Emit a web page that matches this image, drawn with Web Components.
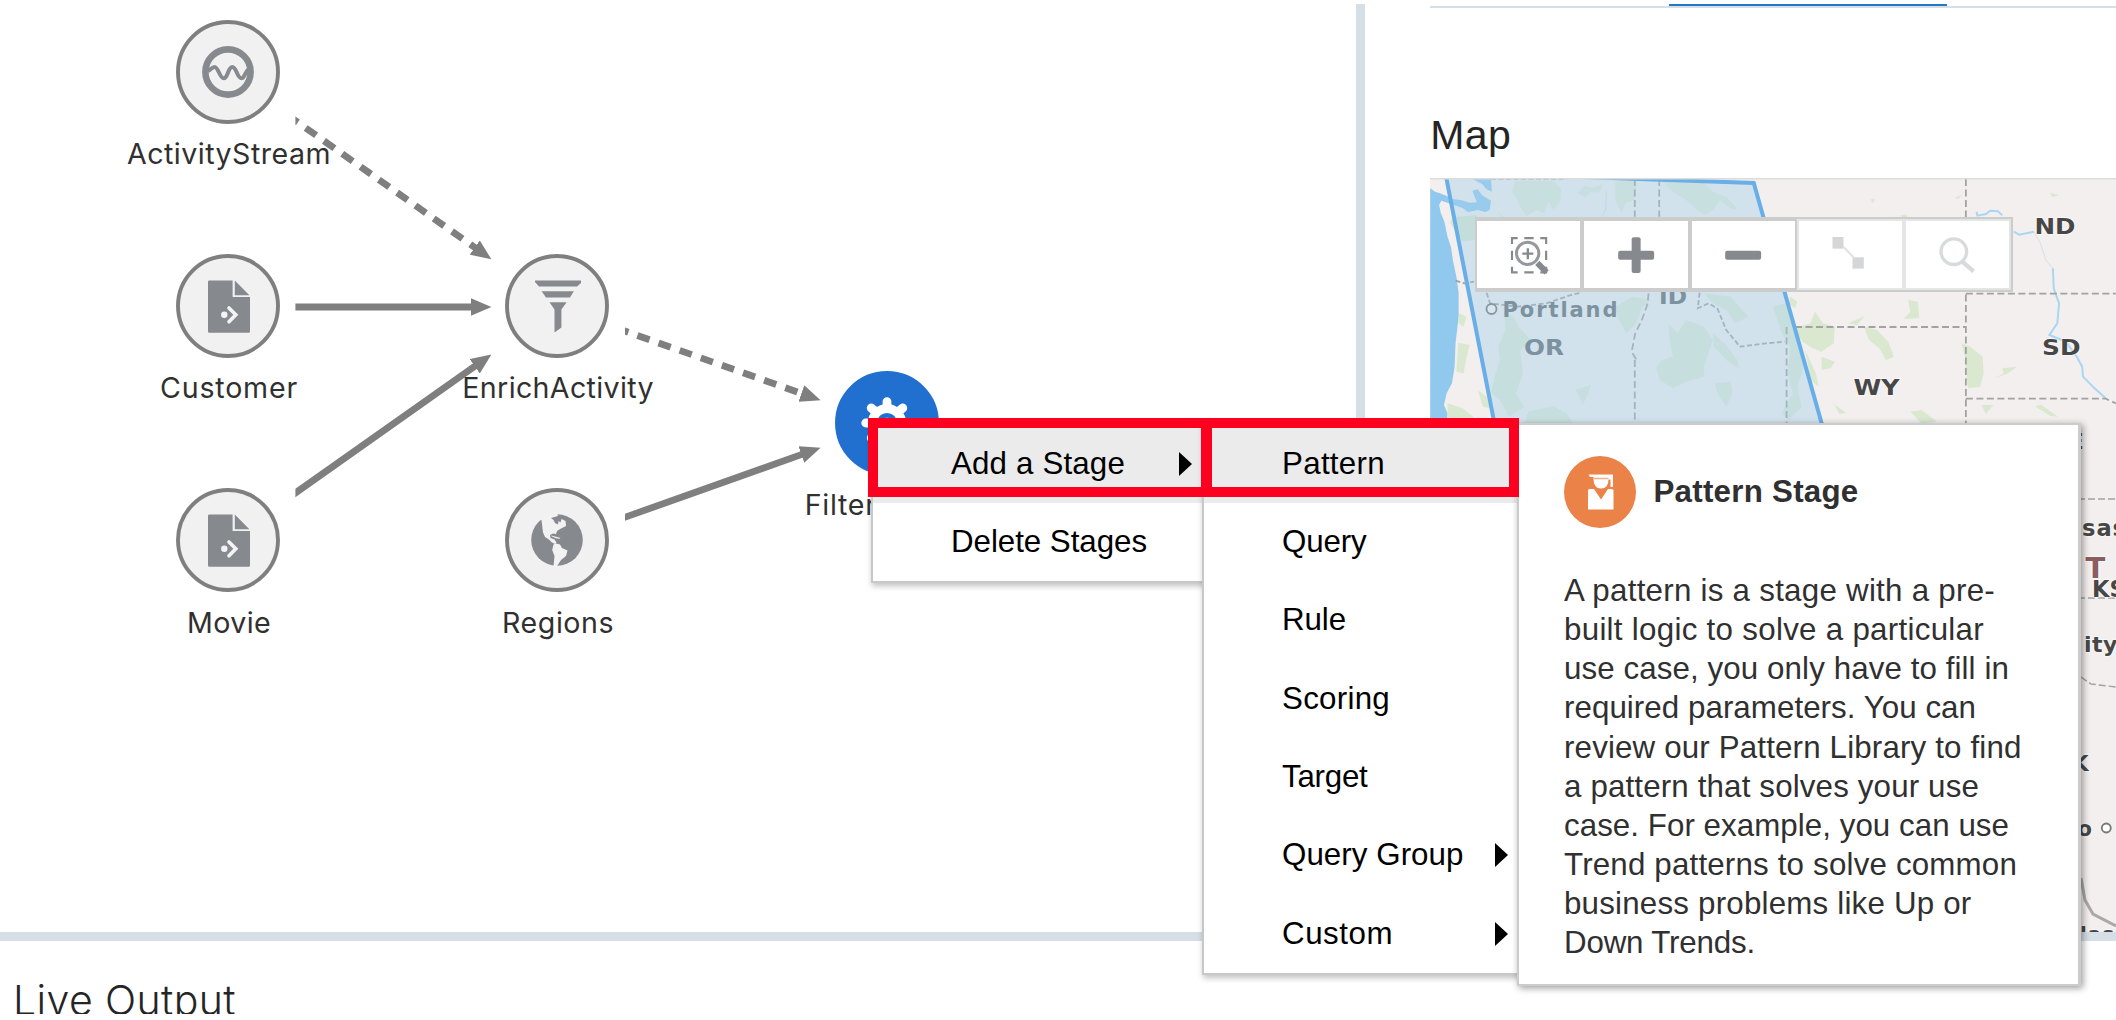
<!DOCTYPE html>
<html lang="en">
<head>
<meta charset="utf-8">
<title>Pipeline editor</title>
<style>
body{margin:0;background:#fff;overflow:hidden;font-family:"Liberation Sans",Arial,sans-serif}
</style>
</head>
<body>
<pipeline-app></pipeline-app>
<script>
const define=(name,html,extra)=>{
  const t=document.createElement('template');
  t.innerHTML=html;
  customElements.define(name,class extends HTMLElement{
    connectedCallback(){
      if(this.shadowRoot)return;
      this.attachShadow({mode:'open'}).append(t.content.cloneNode(true));
      if(extra)extra(this,this.shadowRoot);
    }
  });
};

/* A single line of text whose tracking is adjusted to a given advance width. */
define('fit-text',`<style>:host{display:inline-block;white-space:nowrap}</style><span><slot></slot></span>`,(el,root)=>{
  const w=parseFloat(el.getAttribute('w'));
  if(!w)return;
  const natural=root.querySelector('span').getBoundingClientRect().width;
  el.style.letterSpacing=((w-natural)/el.textContent.length)+'px';
});

const icons={
  stream:`<circle r="22.6" fill="none" stroke="#868a8f" stroke-width="6.6"/><path d="M-20-1C-17-3-15.500-5-13.500-5C-9.500-5-8.500 6.300-4.300 6.300S0-5 4.300-5S9 6.300 13.500 6.300C16 6.300 17 1 20-2.500" fill="none" stroke="#868a8f" stroke-width="4"/>`,
  file:`<path fill="#868a8f" d="M-19-25.600H4.600V-8.900H22V25.500a1.300 1.300 0 0 1-1.300 1.300H-18.700a1.300 1.300 0 0 1-1.300-1.300V-24.300A1.300 1.300 0 0 1-19-25.600ZM6.800-25.600L21.400-10.800H6.800Z"/><circle cx="-3.700" cy="8.800" r="3.200" fill="#f4f4f4"/><path d="M1 2L7.800 8.800L1 15.800" fill="none" stroke="#f4f4f4" stroke-width="3.600" stroke-linecap="round"/>`,
  funnel:`<path fill="#868a8f" d="M-22-25.500H24V-23L20-19.500H-18L-22-24ZM-15.400-14.700H16.800L13-8.500H-11ZM-7.500-3.800H9.600L4.400 3.500V21.500L-2.500 26.400V3.500Z"/>`,
  globe:`<circle r="25.800" fill="#868a8f"/><path fill="#f2f2f2" d="M-18-21L-15.500-20L-14-7.500L-12-3L-8-.5L-5 2.500L-2 4L-.5 2.500L-2.500-.5L-6.500-2L-7-5L-4-6.500L-1-6L0-9L4-11.500L9-14L8.500-19L4.500-21L3.500-17.500L1.500-19L1-15.500L-2-17L-3.500-20L-6-22L1-24L0-27L-12-26ZM-3.500 4.500L-1 3.500L3 4.500L5 8L10.500 10.500L9 16L4 20L-.5 27H-3.500L-2.500 16L-4.800 10ZM-6-4.500L0-3L3.500-2L2.500-1.200L-1-1.800L-5-3.500Z"/>`,
  gear:`<circle r="14.600" fill="none" stroke="#fff" stroke-width="9"/><g stroke="#fff" stroke-width="8.800" stroke-linecap="round"><path d="M0-16V-21.300M0 16V21.300M-16 0H-21.300M16 0H21.300M-11.500-11.500L-15.800-15M11.500-11.500L15.800-15M-11.500 11.500L-15.800 15M11.500 11.500L15.800 15"/></g><circle r="5.500" fill="#8fb6e6"/>`
};

define('stage-node',`<style>
:host{position:absolute;width:104px;display:flex;flex-direction:column;align-items:center;gap:13.500px;
 font:28.600px/34px Inter,"Helvetica Neue",sans-serif;color:#303030}
svg{display:block;width:104px;height:104px;flex:none}
::slotted(fit-text){margin-left:2px}
</style><svg viewBox="-52 -52 104 104"><circle class="bg" r="50" fill="#f1f1f1" stroke="#7f7f7f" stroke-width="3.900"/><g></g></svg><slot></slot>`,(el,root)=>{
  const k=el.getAttribute('icon');
  el.style.left=(el.getAttribute('cx')-52)+'px';
  el.style.top=(el.getAttribute('cy')-52)+'px';
  root.querySelector('g').innerHTML=icons[k];
  if(k==='gear'){const b=root.querySelector('.bg');b.setAttribute('fill','#216fce');b.setAttribute('stroke','#216fce')}
});

define('pipeline-canvas',`<style>
:host{display:block;position:relative;overflow:hidden}
svg{display:block;width:1356px;height:928px}
</style>
<svg viewBox="0 4 1356 928">
<defs>
<marker id="a" markerUnits="userSpaceOnUse" markerWidth="22" markerHeight="18" refX="20.400" refY="8.700" orient="auto"><path d="M0 0L20.400 8.700L0 17.400Z" fill="#7f7f7f"/></marker>
<clipPath id="c"><rect x="295.400" y="0" width="200" height="900"/></clipPath>
<clipPath id="d"><rect x="625" y="0" width="200" height="900"/></clipPath>
</defs>
<g stroke="#7f7f7f" fill="none">
<g clip-path="url(#c)">
<path stroke-width="6.800" stroke-dasharray="12.800 9.600" d="M287.400 115L480 251.200"/>
<path stroke-width="6.800" d="M290 307H474M290 496.800L478 364"/>
<g stroke-width=".01"><path marker-end="url(#a)" d="M295.400 120.700L491.400 259.300"/><path marker-end="url(#a)" d="M295 307H491.400"/><path marker-end="url(#a)" d="M295.400 493L491.400 354.500"/></g>
</g>
<g clip-path="url(#d)">
<path stroke-width="6.800" stroke-dasharray="12.800 9.600" d="M616.300 328L804 394.300"/>
<path stroke-width="6.800" d="M619 519.400L804 453.600"/>
<g stroke-width=".01"><path marker-end="url(#a)" d="M624.900 331L820.600 400.300"/><path marker-end="url(#a)" d="M624.900 517.300L820.600 447.700"/></g>
</g>
</g>
</svg>
<stage-node icon="stream" cx="228" cy="67.700"><fit-text w="204">ActivityStream</fit-text></stage-node>
<stage-node icon="file" cx="228" cy="301.600"><fit-text w="138">Customer</fit-text></stage-node>
<stage-node icon="file" cx="228" cy="536"><fit-text w="84">Movie</fit-text></stage-node>
<stage-node icon="funnel" cx="557.100" cy="301.600"><fit-text w="191.500">EnrichActivity</fit-text></stage-node>
<stage-node icon="globe" cx="557.100" cy="536"><fit-text w="112">Regions</fit-text></stage-node>
<stage-node icon="gear" cx="886.700" cy="418.700" style="align-items:flex-start"><fit-text w="72" style="margin-left:-30px">Filter</fit-text></stage-node>
`);

define('tool-button',`<style>
:host{box-sizing:border-box;display:flex;align-items:center;justify-content:center;width:107.200px;height:71.300px;border:2px solid #ccc;background:#fff}
:host([disabled]){border-color:#e4e6e6}
svg{width:36.300px;height:36.300px;overflow:visible}
</style><svg></svg>`,(el,root)=>{
  const s=root.querySelector('svg');
  const g={
    marquee:['121 94 109 109',`<g fill="none" stroke="#868a8f" stroke-width="6.500"><path d="M124 115V97.500H141M161 97.500H189M209 97.500H226.500V115M226.500 135V163M226.500 183V200H209M189 200H161M141 200H124V183M124 163V135"/><circle cx="171" cy="143" r="33.500" stroke-width="9" stroke="#95999d"/><path d="M155 144H188M171.500 128V161" stroke-width="7"/><path d="M200 172L228 200" stroke-width="18"/></g>`],
    plus:['443 94 109 109',`<g fill="#868a8f"><rect x="484" y="95" width="27" height="107" rx="6"/><rect x="443.500" y="135" width="108" height="27" rx="6"/></g>`],
    minus:['764.500 94 109 109',`<rect x="765" y="135" width="108" height="27" rx="6" fill="#868a8f"/>`],
    link:['1086.500 94 109 109',`<g fill="#d5d6d8"><rect x="1088" y="94" width="33" height="35"/><rect x="1148" y="155" width="34" height="34"/><path d="M1119 122L1154 158" stroke="#dfe0e1" stroke-width="6"/></g>`],
    search:['1408 94 109 109',`<g fill="none" stroke="#d9dadb"><circle cx="1452.500" cy="138" r="38.500" stroke-width="10"/><path d="M1477 167L1512 197" stroke-width="13"/></g>`]
  }[el.getAttribute('icon')];
  s.setAttribute('viewBox',g[0]);s.innerHTML=g[1];
});

define('map-toolbar',`<style>:host{position:absolute;left:45px;top:39px;display:flex;border:solid #ccc;border-width:2px 2px 2px 0}</style>
<tool-button icon="marquee"></tool-button><tool-button icon="plus"></tool-button><tool-button icon="minus"></tool-button><tool-button icon="link" disabled></tool-button><tool-button icon="search" disabled></tool-button>`);

define('region-map',`<style>
:host{display:block;position:relative;width:686px;height:754px;overflow:hidden;background:#f3efee}
svg{display:block;width:686px;height:754px}
text{font-family:"DejaVu Sans","Noto Sans",sans-serif;font-weight:700;fill:#474747;stroke:#fff;stroke-width:2px;paint-order:stroke;stroke-opacity:.5}
.o{fill:#7d92a0;stroke:none}
</style>
<svg viewBox="0 0 686 754">
<g transform="translate(-10 -18) scale(.4438 .33333)">
 <path fill="#90c8ee" d="M23 85L34 95 45 100 60 108 75 118 92 120 112 128 128 127 118 92 130 88 140 106 160 122 157 150 148 156 130 150 108 156 96 144 62 128 48 122 43 135 47 160 55 185 62 230 70 262 74 300 82 350 87 400 87 470 80 550 78 620 72 670 60 700 54 735 62 760 60 850 23 850ZM118 57H160L162 95 150 88 140 72Z"/>
 <g fill="#d9e8cf">
  <path d="M72 172L128 165 124 240 96 244 80 215 68 190ZM86 548L112 555 105 590 98 640 82 635ZM62 730L96 745 120 770 130 850 62 850Z"/>
  <path d="M88 460L105 470 98 500 86 490ZM130 690L150 710 158 745 142 740Z"/>
  <path opacity=".75" d="M215 62H300L318 85 316 125 300 150 290 125 280 160 262 150 240 168 225 140 220 120 208 95ZM370 78L390 85 412 72 404 98 385 95 372 112 355 100ZM440 66L490 60 482 120 462 130 455 160 440 120ZM548 64L640 68 660 95 690 110 715 148 700 146 676 120 660 150 640 165 625 150 600 120 570 95Z"/>
  <path opacity=".8" d="M190 455L212 470 222 500 250 540 226 570 232 640 216 700 235 740 200 770 180 720 160 700 170 640 180 600 176 560 192 510ZM440 440L478 410 520 420 500 445 488 490 465 520 448 480ZM560 490L580 520 600 480 640 500 660 540 640 620 640 650 600 665 570 685 540 660 532 620 545 600 570 590 562 540ZM640 400L700 410 740 470 710 490 690 450 660 430ZM664 670L700 665 704 700 690 740 670 700ZM795 440L825 430 835 480 860 560 865 620 850 680 860 740 830 780 815 760 840 700 828 640 835 560 815 520Z"/>
  <path opacity=".8" d="M350 690L385 675 378 705 366 735 358 705ZM245 755L300 738 330 760 345 790H235ZM660 520L690 555 715 600 718 625 690 600 662 560Z"/>
  <path d="M842 505L880 490 890 455 908 490 935 500 932 550 905 575 885 565 862 545ZM835 410L850 425 845 445 830 430ZM868 570L892 640 898 680 880 660ZM905 590L935 605 925 625 905 630ZM1100 420L1122 425 1125 475 1090 476 1105 455ZM1000 500L1030 510 1055 545 1068 590 1050 600 1035 565 1012 540ZM965 490L1002 468 985 495Z"/>
  <path d="M1220 550L1240 560 1268 590 1270 640 1262 680 1235 685 1230 630 1228 590ZM1295 655L1315 640 1312 625 1345 620 1325 640ZM1105 755L1130 750 1165 785 1130 790ZM925 715L935 735 960 758 945 762ZM1385 738L1400 735 1438 770 1420 768ZM1408 70L1420 98 1440 105 1425 112ZM1015 118L1025 118 1020 130ZM1080 168L1095 163 1100 175ZM1205 112L1222 105 1212 118ZM1265 735L1292 735 1275 762Z"/>
 </g>
 <g fill="none" stroke="#a9d6f4" stroke-width="2" vector-effect="non-scaling-stroke">
  <path vector-effect="non-scaling-stroke" stroke-width="2" d="M1254 155L1256 167 1275 162 1285 152 1302 154 1312 166M1338 215L1350 224 1383 215M1426 325L1428 385 1440 430 1436 490 1418 525 1455 545 1480 590 1492 620 1494 650 1520 685 1545 715"/>
  <path vector-effect="non-scaling-stroke" stroke-width="1" opacity=".5" d="M1383 215L1398 250 1410 300 1426 325M420 90L418 150 410 170M178 160L190 175"/>
 </g>
 <g fill="none" stroke="#a3a1a1" stroke-width="1.800" stroke-dasharray="7 3.500">
  <path vector-effect="non-scaling-stroke" d="M1230 57V790M1230 401H1568M1230 716H1545L1568 730M845 501H1230M826 501V790M484 57V170M484 600V790M539 57V170M515 400L513 430 500 480 485 520 477 575 488 600"/>
  <path vector-effect="non-scaling-stroke" stroke-dasharray="5 2.500" d="M80 362L100 370 122 365M150 398L158 430 220 440 285 430 340 405 365 398M630 398L626 445 650 430 670 445 690 510 712 545 720 560 780 550 822 545M160 57H330"/>
 </g>
 <path fill="#a4cfea" fill-opacity=".42" stroke="#6aaee8" stroke-width="4" vector-effect="non-scaling-stroke" d="M58 45L178 860 920 860 752 69 170 42Z"/>
</g>
<g fill="none" stroke="#a3a1a1" stroke-width="1.500"><path stroke-dasharray="7 3" d="M648 321H686M648 420H686M651 499L661 506 686 509"/><path stroke="#aaa8a8" stroke-width="3" d="M651 700L655 722 663 736 686 748"/></g>
<path d="M0 .5H686" stroke="#dcdcdc" stroke-width="2"/>
<text x="604.500" y="56" font-size="21.500" textLength="41" lengthAdjust="spacingAndGlyphs">ND</text>
<text x="612" y="176.500" font-size="21.500" textLength="38.500" lengthAdjust="spacingAndGlyphs">SD</text>
<text x="423.500" y="217" font-size="21.500" textLength="46" lengthAdjust="spacingAndGlyphs">WY</text>
<text class="o" x="94" y="176.500" font-size="21.500" textLength="40" lengthAdjust="spacingAndGlyphs">OR</text>
<text class="o" x="229" y="126" font-size="21.500" textLength="28" lengthAdjust="spacingAndGlyphs">ID</text>
<text class="o" x="72.500" y="139" font-size="21" textLength="115">Portland</text>
<circle cx="61.500" cy="131" r="5" fill="#dbe7ee" stroke="#8497a3" stroke-width="1.800"/>
<text x="639" y="271" font-size="21.500" >E</text>
<text x="652" y="358" font-size="22.500" letter-spacing="1">sas</text>
<text x="655.500" y="400" font-size="29" style="fill:#8a5d60">T</text>
<text x="662" y="419" font-size="22.500">KS</text>
<text x="654" y="473.700" font-size="22" letter-spacing=".5">ity</text>
<text x="642" y="593" font-size="21.500">K</text>
<text x="647.500" y="657.500" font-size="21">o</text>
<circle cx="676.300" cy="650" r="4.500" fill="#fff" stroke="#777" stroke-width="1.800"/>
<text x="650" y="763" font-size="20" letter-spacing="1">las</text>
</svg>
<map-toolbar></map-toolbar>`);

define('map-panel',`<style>
:host{display:flex;flex-direction:column;box-sizing:border-box;padding-left:65px;flex:1;min-width:0}
.tabs{height:5px;background:linear-gradient(#fff 0 2px,#d6dfe6 2px 4px,#fff 4px);display:flex}
.tabs i{display:block;margin-left:238.500px;width:278.500px;height:2.300px;background:#1f78c8}
h2{margin:103px 0 20px;font-weight:400;font-size:41px;line-height:46px;color:#252525}
</style><div class="tabs"><i></i></div><h2><fit-text w="81">Map</fit-text></h2><region-map></region-map>`);

define('menu-item',`<style>
:host{display:flex;align-items:center;justify-content:space-between;height:78.350px;line-height:80px;padding:0 10px 0 78px;font-size:31.300px;color:#000}
:host([active]){background:#ebebeb}
svg{display:none;width:13px;height:24px}
:host([sub]) svg{display:block}
</style><slot></slot><svg viewBox="0 0 13 24"><path d="M0 0L13 12L0 24Z"/></svg>`);

define('popup-menu',`<style>
:host{position:absolute;box-sizing:border-box;background:#fff;border:2px solid #c8c8c8;box-shadow:1px 3px 6px rgba(0,0,0,.25)}
</style><slot></slot>`);

define('red-frame',`<style>:host{position:absolute;box-sizing:border-box;border:10px solid #fc0020;pointer-events:none}</style>`);

define('stage-tooltip',`<style>
:host{position:absolute;left:1517px;top:422.500px;width:564px;height:563px;box-sizing:border-box;border:2px solid #ccc;border-width:2px 3px 2px 2px;background:#fff;
 box-shadow:2px 2px 7px rgba(0,0,0,.4);padding:31px 0 0 45px;color:#303030;font-size:31.300px}
header{display:flex;align-items:center;gap:17.500px;height:72px}
svg{width:72px;height:72px;flex:none}
b{line-height:36px}
.body{margin-top:43.500px;line-height:39.150px;display:flex;flex-direction:column;align-items:flex-start}
</style>
<header><svg viewBox="0 0 72 72"><circle cx="36" cy="36" r="36" fill="#eb8348"/><path fill="#fff" d="M24 53.500V34.500Q24 33 25.500 33H30L37 43.500 44 33H48Q49.500 33 49.500 34.500V53.500ZM24.500 18.500H49V31H46.500V23.500H44.500Q44.500 32.500 37 32.500T29.500 22.500V21H26Z"/><path d="M30 22.500H44.500" stroke="#f3b18b" stroke-width="1.600"/></svg><b><fit-text w="205">Pattern Stage</fit-text></b></header>
<div class="body">
<fit-text w="431">A pattern is a stage with a pre-</fit-text>
<fit-text w="420">built logic to solve a particular</fit-text>
<fit-text w="445">use case, you only have to fill in</fit-text>
<fit-text w="412">required parameters. You can</fit-text>
<fit-text w="457.500">review our Pattern Library to find</fit-text>
<fit-text w="415">a pattern that solves your use</fit-text>
<fit-text w="445">case. For example, you can use</fit-text>
<fit-text w="453">Trend patterns to solve common</fit-text>
<fit-text w="407.500">business problems like Up or</fit-text>
<fit-text w="191">Down Trends.</fit-text>
</div>`);

define('live-output',`<style>
:host{display:block;height:73px;overflow:hidden;padding-left:13px}
h2{margin:0;padding-top:34.500px;font:300 41px/48px Inter,"Helvetica Neue",sans-serif;color:#252525}
</style><h2><fit-text w="223">Live Output</fit-text></h2>`);

define('pipeline-app',`<style>
:host{position:relative;display:flex;flex-direction:column;box-sizing:border-box;width:2116px;height:1020px;padding:4px 0 6px;overflow:hidden;background:#fff}
.work{display:flex;height:928px;flex:none}
pipeline-canvas{width:1356.300px;flex:none}
.v{width:9px;background:#d6dfe6;flex:none}
.h{height:9px;background:#d6dee6;flex:none}
</style>
<div class="work"><pipeline-canvas></pipeline-canvas><div class="v"></div><map-panel></map-panel></div>
<div class="h"></div>
<live-output></live-output>
<popup-menu style="left:871px;top:422.400px;width:340px">
<menu-item active sub style="padding-right:17px"><fit-text w="174">Add a Stage</fit-text></menu-item><menu-item><fit-text w="196">Delete Stages</fit-text></menu-item>
</popup-menu>
<popup-menu style="left:1202px;top:422.400px;width:318px">
<menu-item active><fit-text w="103">Pattern</fit-text></menu-item><menu-item><fit-text w="84.500">Query</fit-text></menu-item><menu-item><fit-text w="64">Rule</fit-text></menu-item><menu-item><fit-text w="108">Scoring</fit-text></menu-item><menu-item><fit-text w="85.500">Target</fit-text></menu-item><menu-item sub><fit-text w="181.500">Query Group</fit-text></menu-item><menu-item sub><fit-text w="111">Custom</fit-text></menu-item>
</popup-menu>
<stage-tooltip></stage-tooltip>
<red-frame style="left:868px;top:418px;width:344px;height:79px"></red-frame>
<red-frame style="left:1201px;top:418px;width:318px;height:79px"></red-frame>
`);
</script>
</body>
</html>
